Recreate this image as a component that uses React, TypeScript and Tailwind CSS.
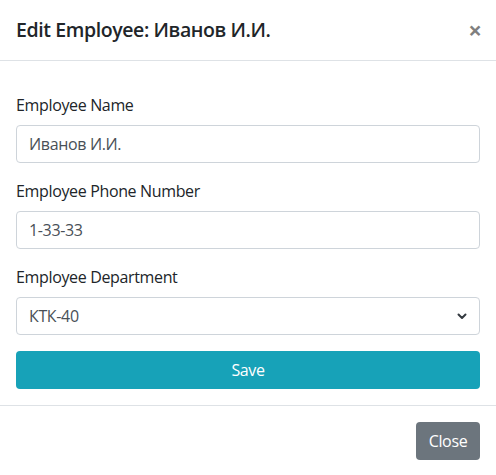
import React from 'react';

const font = { fontFamily: '"Segoe UI", "Open Sans", "Noto Sans", sans-serif' };

export default function App() {
  return (
    <div className="h-[475px] w-[496px] bg-white text-[#212529]" style={font}>
      {/* Header */}
      <div className="flex h-[61px] items-center justify-between border-b border-[#dee2e6] px-4">
        <h5 className="text-[19.5px] font-semibold leading-[30px] tracking-[-0.4px]">Edit Employee: Иванов И.И.</h5>
        <button className="-mr-0.5 text-[24px] font-bold leading-none text-black/50">×</button>
      </div>

      {/* Body */}
      <div className="px-4 pt-8 pb-4 tracking-[-0.35px]">
        <div className="mb-4">
          <label className="mb-2 block text-[16px] leading-6">Employee Name</label>
          <input
            defaultValue="Иванов И.И."
            className="block h-[38px] w-full rounded border border-[#ced4da] px-3 text-[16px] text-[#495057] outline-none"
          />
        </div>
        <div className="mb-4">
          <label className="mb-2 block text-[16px] leading-6">Employee Phone Number</label>
          <input
            defaultValue="1-33-33"
            className="block h-[38px] w-full rounded border border-[#ced4da] px-3 text-[16px] text-[#495057] outline-none"
          />
        </div>
        <div className="mb-4">
          <label className="mb-2 block text-[16px] leading-6">Employee Department</label>
          <div className="flex h-[38px] w-full items-center justify-between rounded border border-[#ced4da] pr-3 pl-3 text-[16px] text-[#495057]">
            <span>КТК-40</span>
            <svg width="10" height="8" viewBox="0 0 10 8" fill="none">
              <path d="M1.5 2.5 5 6l3.5-3.5" stroke="#343a40" strokeWidth="2" strokeLinecap="round" strokeLinejoin="round" />
            </svg>
          </div>
        </div>
        <button className="h-[38px] w-full rounded bg-[#17a2b8] text-[16px] text-white">Save</button>
      </div>

      {/* Footer */}
      <div className="flex justify-end border-t border-[#dee2e6] px-4 pt-4 tracking-[-0.35px]">
        <button className="h-[38px] w-16 rounded bg-[#6c757d] text-[16px] text-white">Close</button>
      </div>
    </div>
  );
}
